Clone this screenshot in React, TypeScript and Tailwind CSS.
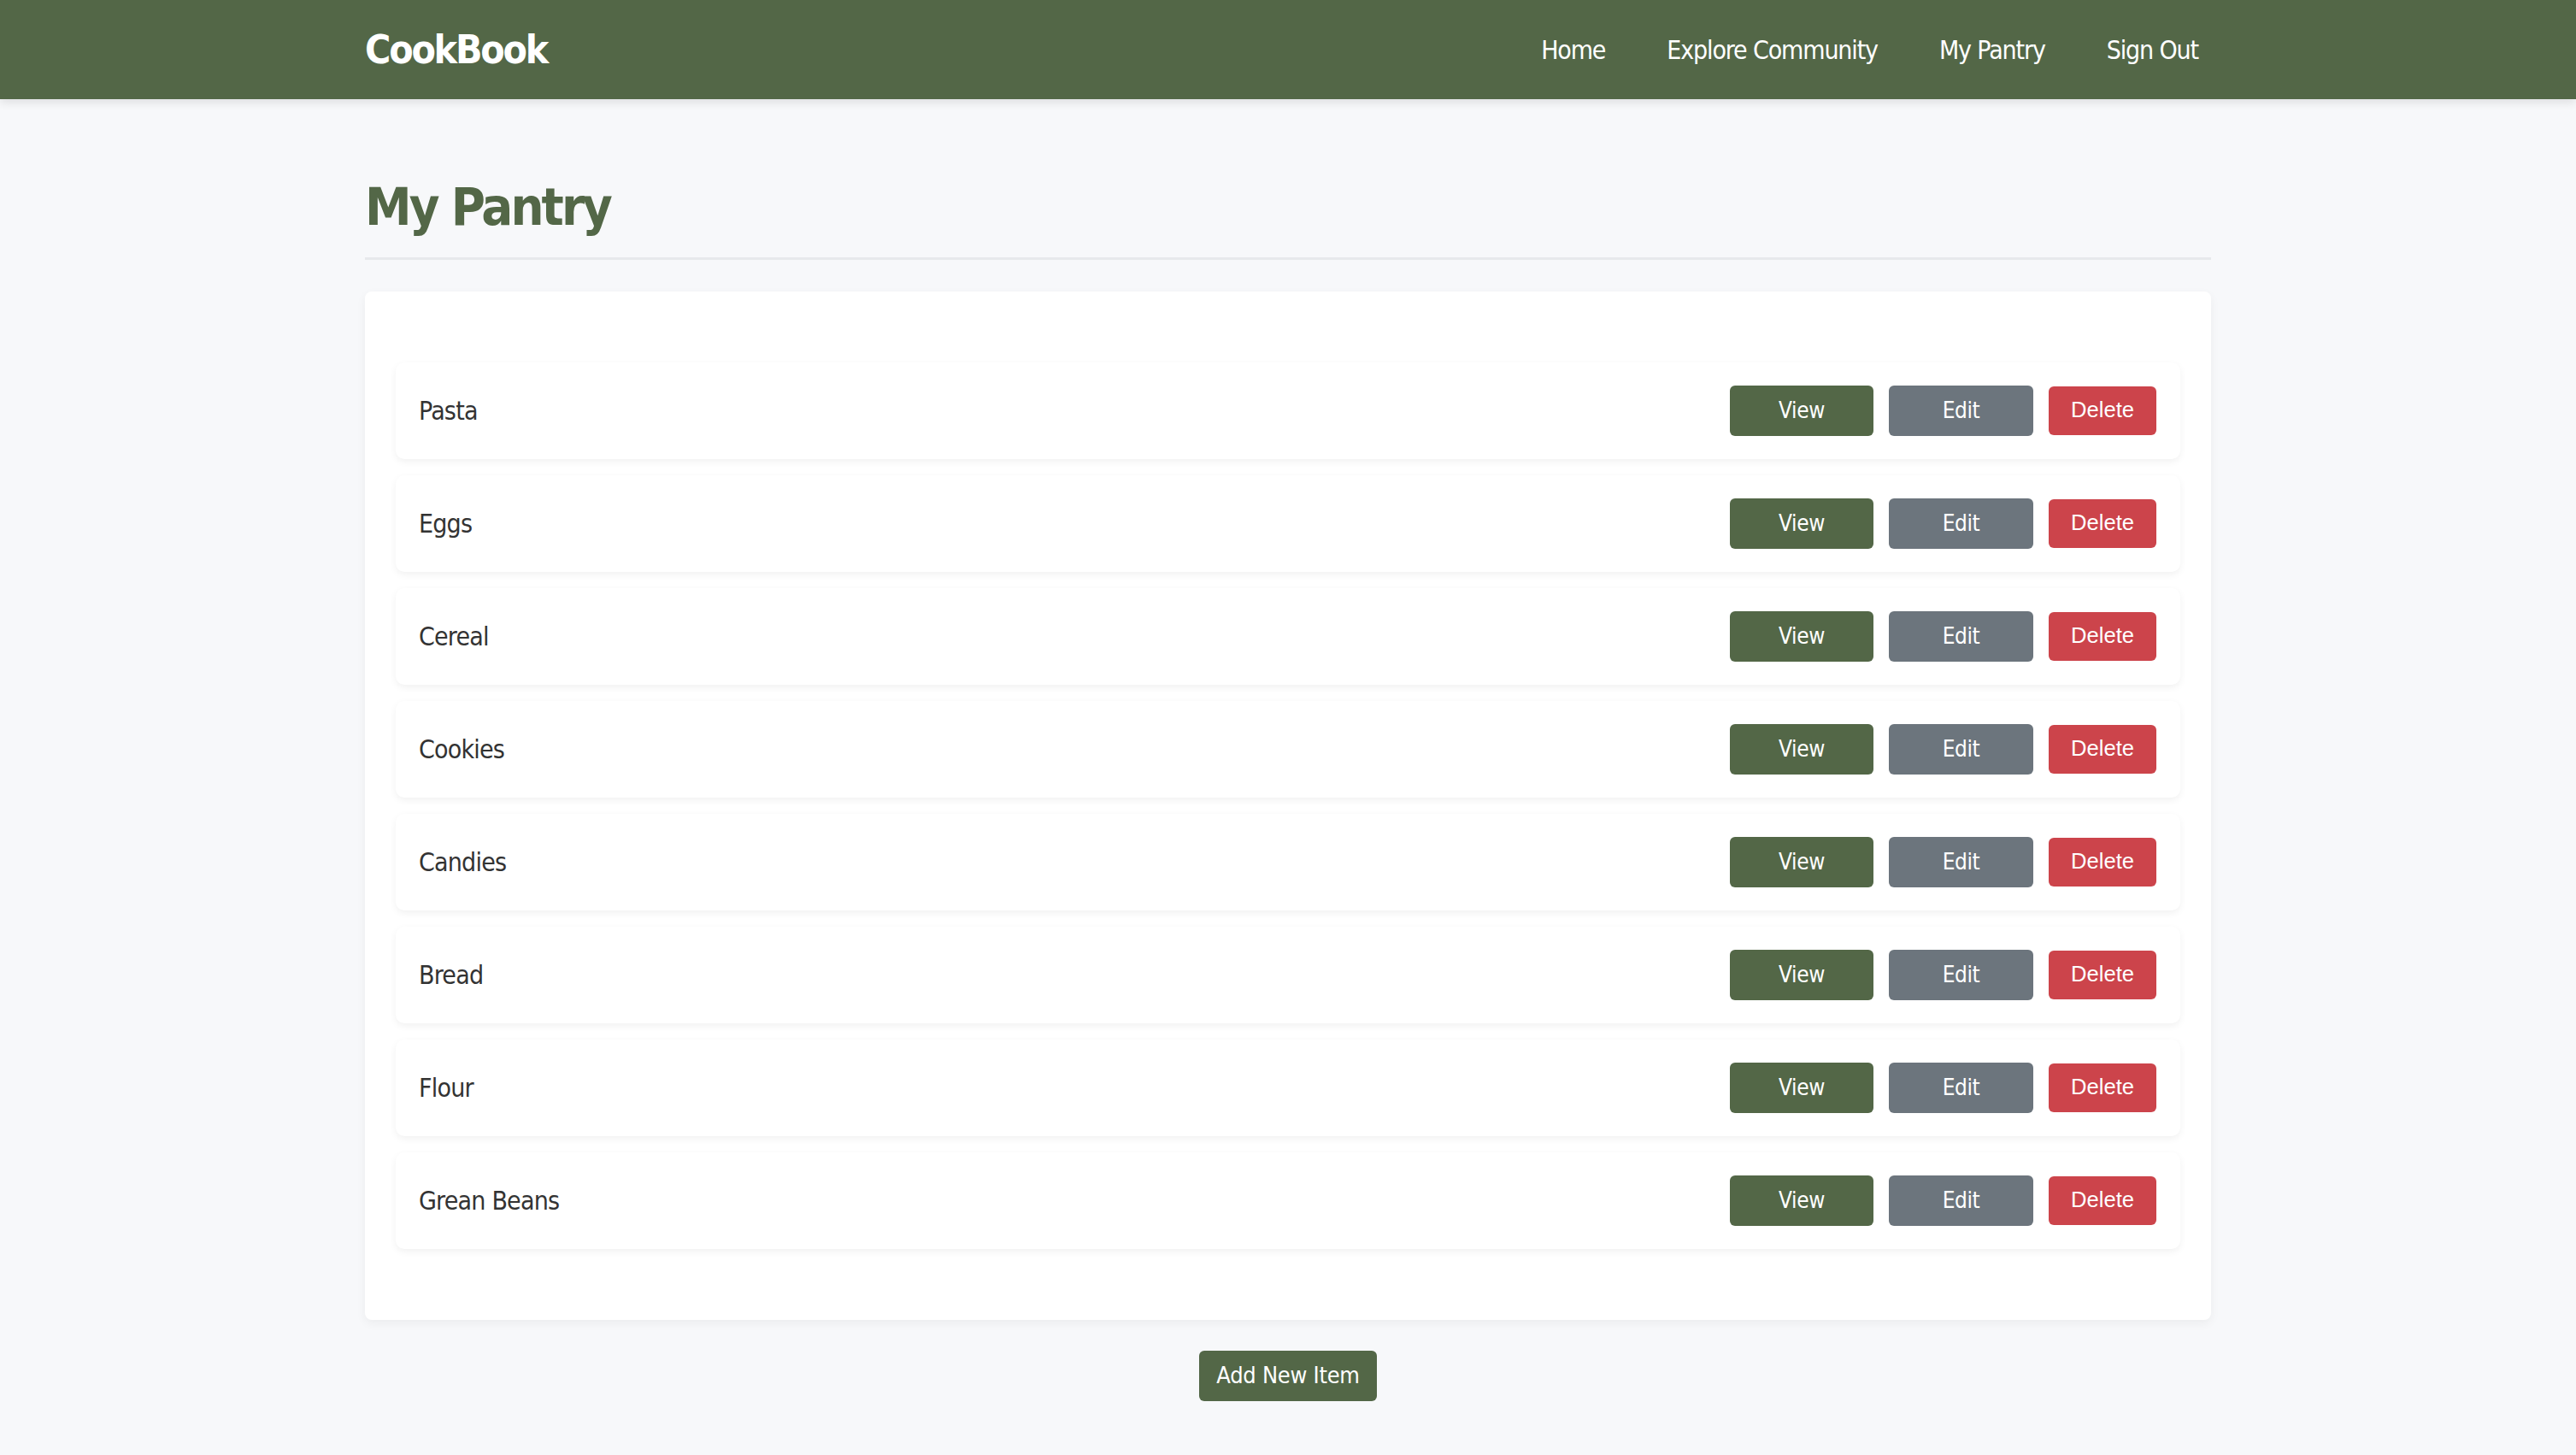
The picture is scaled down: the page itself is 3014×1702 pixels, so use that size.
import { FC } from "react";

const items = ["Pasta", "Eggs", "Cereal", "Cookies", "Candies", "Bread", "Flour", "Grean Beans"];

const font = "font-['DejaVu_Sans_Condensed','DejaVu_Sans',sans-serif] tracking-[-0.05em]";

const PantryRow: FC<{ name: string }> = ({ name }) => {
  return (
    <div className="bg-white h-[113px] rounded-[10px] shadow-[0_3px_8px_rgba(0,0,0,0.06)] flex items-center justify-between pl-[27px] pr-[28px]">
      <span className="text-[30px] text-[#333333]">{name}</span>
      <div className="flex items-center gap-[18px]">
        <button className="w-[168px] h-[59px] rounded-[6px] bg-[#536747] text-white text-[26px] tracking-[-0.015em]">
          View
        </button>
        <button className="w-[169px] h-[59px] rounded-[6px] bg-[#6c757d] text-white text-[26px] tracking-[-0.015em]">
          Edit
        </button>
        <button className="h-[57px] px-[26px] pb-[2px] rounded-[6px] bg-[#cc444b] text-white text-[25.6px] tracking-normal font-['Liberation_Sans',Arial,sans-serif]">
          Delete
        </button>
      </div>
    </div>
  );
};

const App: FC = () => {
  return (
    <div className={`min-h-screen bg-[#f7f8fa] ${font}`}>
      <header className="h-[116px] bg-[#536747] shadow-[0_4px_10px_rgba(0,0,0,0.1)]">
        <div className="w-[2160px] mx-auto h-full flex items-center justify-between">
          <h1 className="text-[46px] font-bold text-white tracking-[-0.048em]">CookBook</h1>
          <nav className="flex items-center gap-[72px] pr-[15px] text-[30px] text-white tracking-[-0.038em]">
            <a href="#">Home</a>
            <a href="#">Explore Community</a>
            <a href="#">My Pantry</a>
            <a href="#">Sign Out</a>
          </nav>
        </div>
      </header>

      <main className="w-[2160px] mx-auto pb-[64px]">
        <h2 className="mt-[90px] text-[61px] leading-[71px] font-bold text-[#536747] tracking-[-0.048em] pb-[24px] border-b-[3px] border-[#e7e9ec]">
          My Pantry
        </h2>

        <div className="mt-[37px] bg-white rounded-[8px] shadow-[0_4px_12px_rgba(0,0,0,0.05)] pt-[83px] pb-[83px] px-[36px] flex flex-col gap-[19px]">
          {items.map((item) => (
            <PantryRow key={item} name={item} />
          ))}
        </div>

        <div className="flex justify-center mt-[36px]">
          <button className="w-[208px] h-[59px] rounded-[6px] bg-[#536747] text-white text-[27px] tracking-[-0.01em]">
            Add New Item
          </button>
        </div>
      </main>
    </div>
  );
};

export default App;
